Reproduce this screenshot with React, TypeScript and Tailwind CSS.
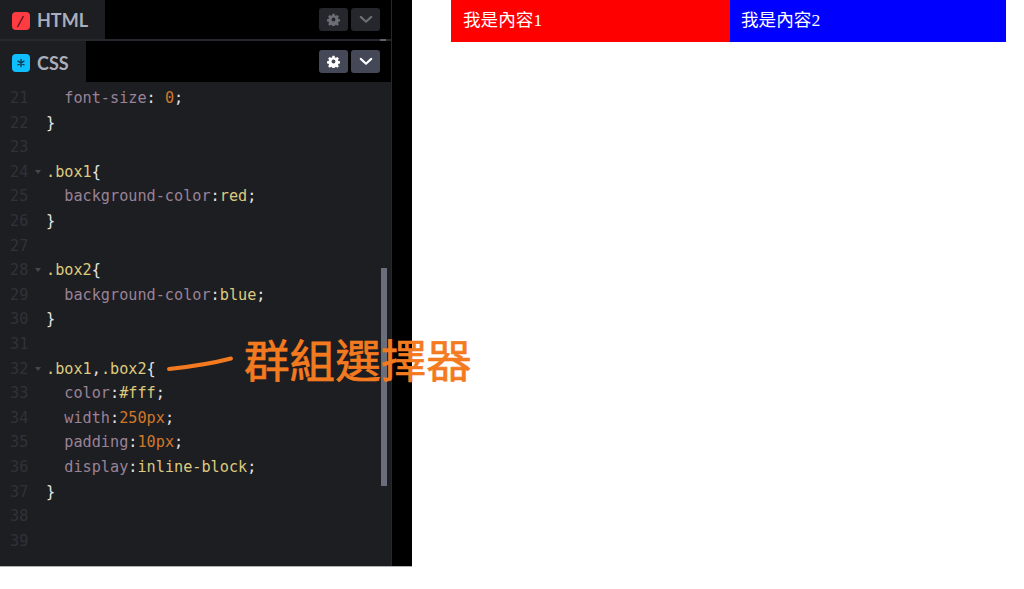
import React from "react";

type Tok = [string, string];
const P = "text-[#e4e4e4]";
const S = "text-[#ddca7e]";
const K = "text-[#9a8297]";
const V = "text-[#ddca7e]";
const N = "text-[#d0782a]";

const rows: { n: number; fold?: boolean; t: Tok[] }[] = [
  { n: 21, t: [["  font-size", K], [":", P], [" ", P], ["0", N], [";", P]] },
  { n: 22, t: [["}", P]] },
  { n: 23, t: [] },
  { n: 24, fold: true, t: [[".box1", S], ["{", P]] },
  { n: 25, t: [["  background-color", K], [":", P], ["red", V], [";", P]] },
  { n: 26, t: [["}", P]] },
  { n: 27, t: [] },
  { n: 28, fold: true, t: [[".box2", S], ["{", P]] },
  { n: 29, t: [["  background-color", K], [":", P], ["blue", V], [";", P]] },
  { n: 30, t: [["}", P]] },
  { n: 31, t: [] },
  { n: 32, fold: true, t: [[".box1", S], [",", P], [".box2", S], ["{", P]] },
  { n: 33, t: [["  color", K], [":", P], ["#fff", V], [";", P]] },
  { n: 34, t: [["  width", K], [":", P], ["250px", N], [";", P]] },
  { n: 35, t: [["  padding", K], [":", P], ["10px", N], [";", P]] },
  { n: 36, t: [["  display", K], [":", P], ["inline-block", V], [";", P]] },
  { n: 37, t: [["}", P]] },
  { n: 38, t: [] },
  { n: 39, t: [] },
];

function Gear({ className }: { className: string }) {
  return (
    <svg viewBox="0 0 24 24" className={className} fill="currentColor">
      <path
        fillRule="evenodd"
        d="M10 1.5h4l.6 3 1.9.8 2.6-1.7 2.8 2.8-1.7 2.6.8 1.9 3 .6v4l-3 .6-.8 1.9 1.7 2.6-2.8 2.8-2.6-1.7-1.9.8-.6 3h-4l-.6-3-1.9-.8-2.6 1.7-2.8-2.8 1.7-2.6-.8-1.9-3-.6v-4l3-.6.8-1.9-1.7-2.6 2.8-2.8 2.6 1.7 1.9-.8zM12 8.4a3.6 3.6 0 1 0 0 7.2 3.6 3.6 0 0 0 0-7.2z"
      />
    </svg>
  );
}

function Chevron({ className }: { className: string }) {
  return (
    <svg viewBox="0 0 16 10" className={className} fill="none" stroke="currentColor" strokeWidth="2.4" strokeLinecap="round" strokeLinejoin="round">
      <path d="M2 2l6 5.5L14 2" />
    </svg>
  );
}

function Buttons({ dim }: { dim?: boolean }) {
  const btn = dim
    ? "bg-[#25272d] text-[#6c6e76]"
    : "bg-[#444857] text-white";
  return (
    <div className="flex gap-[3px] pr-[11px]">
      <div className={`w-[29px] h-[23px] rounded-[3px] flex items-center justify-center ${btn}`}>
        <Gear className="w-[13px] h-[13px]" />
      </div>
      <div className={`w-[29px] h-[23px] rounded-[3px] flex items-center justify-center ${btn}`}>
        <Chevron className="w-[14px] h-[9px]" />
      </div>
    </div>
  );
}

export default function App() {
  return (
    <div className="relative w-[1024px] h-[589px] bg-white overflow-hidden flex items-start font-['Liberation_Sans',sans-serif]">
      <div className="w-[412px] h-[567px] shrink-0 bg-black border-b border-[#b0b0b0] flex">
        <div className="w-[392px] h-full border-r border-[#26282c] flex flex-col relative">
          <div className="h-[39px] flex items-center justify-between">
            <div className="w-[105px] h-full bg-[#1d1e22] flex items-center pl-[12px] gap-[7px] pt-[2px]">
              <div className="w-[18px] h-[18px] rounded-[4px] bg-[#ff3c41] flex items-center justify-center">
                <svg viewBox="0 0 18 18" className="w-[18px] h-[18px]" stroke="#6b161b" strokeWidth="1.5">
                  <path d="M5.5 15L11.5 4" />
                </svg>
              </div>
              <span className="font-['Lato',sans-serif] font-bold text-[18px] text-[#aaaebc]">HTML</span>
            </div>
            <Buttons dim />
          </div>
          <div className="h-[2px] bg-[#26282d] flex justify-end pr-[5px]">
            <div className="w-[6px] h-[2px] bg-[#5f6270]" />
          </div>
          <div className="h-[41px] flex items-center justify-between">
            <div className="w-[86px] h-full bg-[#1d1e22] flex items-center pl-[12px] gap-[7px] pt-[3px]">
              <div className="w-[18px] h-[18px] rounded-[4px] bg-[#0ebeff] flex items-center justify-center">
                <svg viewBox="0 0 18 18" className="w-[18px] h-[18px]" stroke="#123a4c" strokeWidth="1.4" strokeLinecap="round">
                  <path d="M9 5.5v7M6 7.2l6 3.6M12 7.2l-6 3.6" />
                </svg>
              </div>
              <span className="font-['Lato',sans-serif] font-bold text-[18px] text-[#aaaebc]">CSS</span>
            </div>
            <Buttons />
          </div>
          <div className="flex-1 bg-[#1d1e22] pt-[4px] font-['DejaVu_Sans_Mono',monospace] text-[15.2px] relative">
            {rows.map((r) => (
              <div key={r.n} className="h-[24.6px] leading-[24.6px] flex whitespace-pre">
                <span className="w-[36px] pl-[10px] text-[#303238] shrink-0">{r.n}</span>
                <span className="w-[10px] shrink-0 flex items-center">
                  {r.fold && <span className="w-0 h-0 ml-[-1px] border-x-[3px] border-x-transparent border-t-[4px] border-t-[#44464e]" />}
                </span>
                <span>
                  {r.t.map((t, i) => (
                    <span key={i} className={t[1]}>{t[0]}</span>
                  ))}
                </span>
              </div>
            ))}
            <div className="absolute left-[381px] top-[186px] w-[6px] h-[218px] bg-[#6a6d7c]" />
          </div>
        </div>
      </div>
      <div className="ml-[39px] flex font-['Liberation_Serif','Noto_Sans_CJK_TC',serif] text-[17.6px] text-white">
        <div className="w-[279px] h-[42px] bg-[#ff0000] pl-[12px] leading-[40px]">我是內容1</div>
        <div className="w-[276px] h-[42px] bg-[#0000ff] pl-[11px] leading-[40px]">我是內容2</div>
      </div>
      <svg className="absolute left-[160px] top-[350px] w-[80px] h-[26px]" viewBox="0 0 80 26" fill="none" stroke="#f47a20" strokeWidth="4" strokeLinecap="round">
        <path d="M9 19C28 17 50 14 71 8.5" />
      </svg>
      <div className="absolute left-[244px] top-[329px] font-['Noto_Sans_CJK_TC',sans-serif] font-normal text-[45.6px] leading-[58px] text-[#f47a20] [-webkit-text-stroke:0.7px_#f47a20] whitespace-nowrap">
        群組選擇器
      </div>
    </div>
  );
}
